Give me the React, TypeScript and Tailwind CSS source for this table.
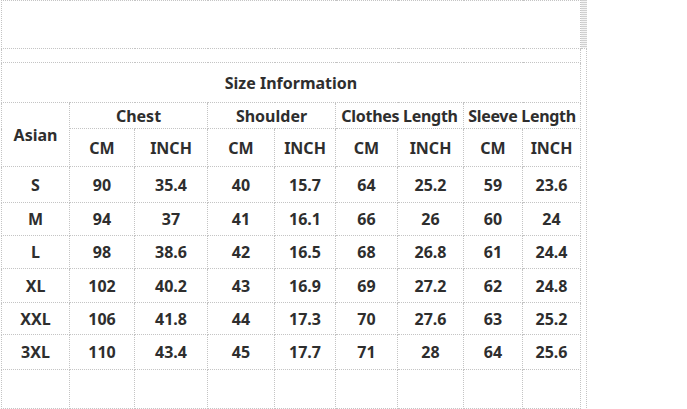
import React from 'react'

const WIDTHS = [68, 65, 73, 67, 61, 62, 66, 59, 58]

const ROWS = [
  ['S', '90', '35.4', '40', '15.7', '64', '25.2', '59', '23.6'],
  ['M', '94', '37', '41', '16.1', '66', '26', '60', '24'],
  ['L', '98', '38.6', '42', '16.5', '68', '26.8', '61', '24.4'],
  ['XL', '102', '40.2', '43', '16.9', '69', '27.2', '62', '24.8'],
  ['XXL', '106', '41.8', '44', '17.3', '70', '27.6', '63', '25.2'],
  ['3XL', '110', '43.4', '45', '17.7', '71', '28', '64', '25.6'],
]
const ROW_H = [36, 33, 33, 34, 32, 35]

const cell = 'border border-dotted border-[#c4c4c4] p-0 text-center align-middle'

export default function App() {
  return (
    <div className="w-[687px] h-[409px] bg-white overflow-hidden flex text-[#2e2e2e] font-['Noto_Sans',sans-serif] font-bold text-[16px]">
      <table className="border-collapse table-fixed w-[580px] h-fit ml-px mt-0 border-dotted">
        <colgroup>
          {WIDTHS.map((w, i) => (
            <col key={i} style={{ width: w }} />
          ))}
        </colgroup>
        <tbody>
          <tr className="h-[48px]">
            <td colSpan={9} className={cell}></td>
          </tr>
          <tr className="h-[14px]">
            <td colSpan={9} className={cell}></td>
          </tr>
          <tr className="h-[40px]">
            <td colSpan={9} className={cell}>Size Information</td>
          </tr>
          <tr className="h-[26px]">
            <td rowSpan={2} className={cell}>Asian</td>
            <td colSpan={2} className={cell}>Chest</td>
            <td colSpan={2} className={cell}>Shoulder</td>
            <td colSpan={2} className={cell + ' whitespace-nowrap tracking-[-0.3px]'}>Clothes Length</td>
            <td colSpan={2} className={cell + ' whitespace-nowrap tracking-[-0.3px]'}>Sleeve Length</td>
          </tr>
          <tr className="h-[38px]">
            {['CM', 'INCH', 'CM', 'INCH', 'CM', 'INCH', 'CM', 'INCH'].map((t, i) => (
              <td key={i} className={cell}>{t}</td>
            ))}
          </tr>
          {ROWS.map((r, i) => (
            <tr key={i} style={{ height: ROW_H[i] }}>
              {r.map((t, j) => (
                <td key={j} className={cell}>{t}</td>
              ))}
            </tr>
          ))}
          <tr className="h-[39px]">
            {WIDTHS.map((_, j) => (
              <td key={j} className={cell}></td>
            ))}
          </tr>
        </tbody>
      </table>
      <div className="w-[6px] flex flex-col">
        <div className="h-[48px] bg-[repeating-linear-gradient(to_bottom,#d0d0d0_0px,#d0d0d0_1px,#f4f4f4_1px,#f4f4f4_2px)]"></div>
        <div className="h-[360px] border-t border-r border-dotted border-[#c4c4c4]"></div>
      </div>
    </div>
  )
}
